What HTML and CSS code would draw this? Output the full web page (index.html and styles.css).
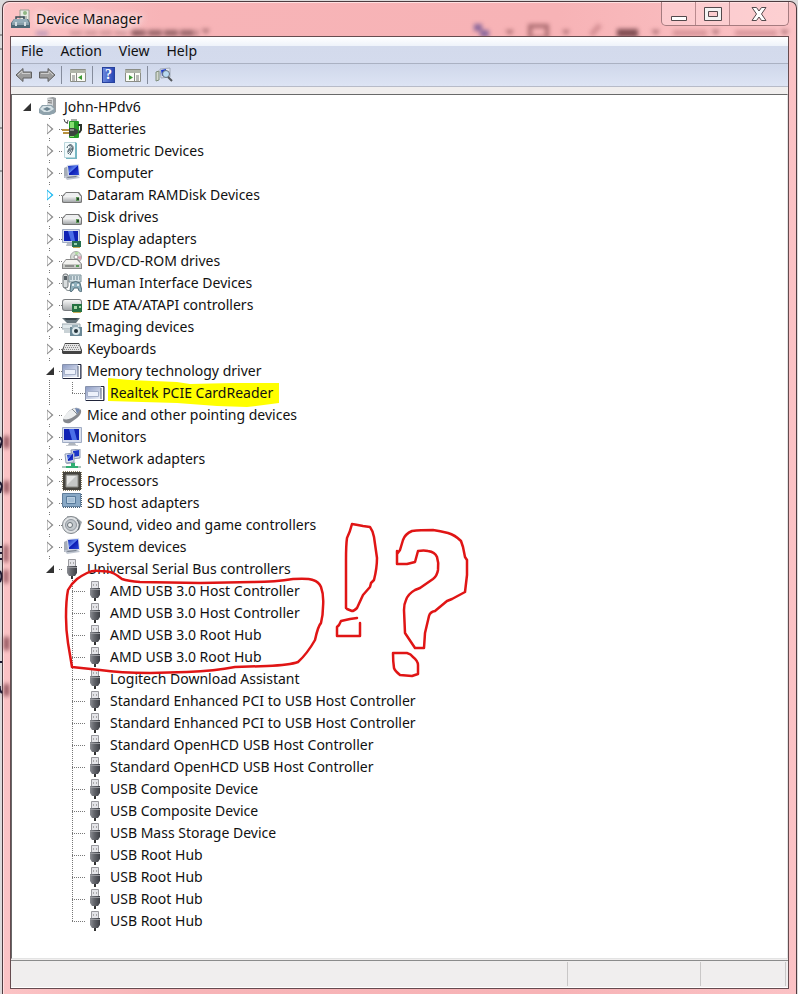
FILE: index.html
```html
<!DOCTYPE html>
<html lang="en">
<head>
    <meta charset="UTF-8">
    <meta name="viewport" content="width=device-width, initial-scale=1.0">
    <title>Device Manager</title>
    <link rel="stylesheet" href="styles.css">
</head>
<body>

    <!-- Icon set -->
    <svg class="sprites" aria-hidden="true">
        <defs>
            <linearGradient id="metal" x1="0" y1="0" x2="0" y2="1"><stop offset="0" stop-color="#f8f8f8"/><stop offset="1" stop-color="#a4a8aa"/></linearGradient>
            <linearGradient id="dark" x1="0" y1="0" x2="1" y2="0"><stop offset="0" stop-color="#8b8d93"/><stop offset=".4" stop-color="#65676d"/><stop offset="1" stop-color="#3d3f45"/></linearGradient>
            <linearGradient id="screen" x1="0" y1="0" x2="1" y2="1"><stop offset="0" stop-color="#0a1fae"/><stop offset=".45" stop-color="#5c80f0"/><stop offset=".5" stop-color="#0c1cb4"/><stop offset="1" stop-color="#2a48d8"/></linearGradient>
            <linearGradient id="card" x1="0" y1="0" x2="1" y2="1"><stop offset="0" stop-color="#8d9cc4"/><stop offset="1" stop-color="#f0f3fb"/></linearGradient>
        </defs>
        <symbol id="i-root" viewBox="0 0 20 20">
            <path d="M8 1l6-1 3 1v14l-3 2-6-2z" fill="#9a9ea1"/><path d="M8 1l6 1v15l-6-2z" fill="#d5d8da"/>
            <path d="M9 3.500l4 .5M9 5.500l4 .5" stroke="#777"/>
            <path d="M0 12l3-4h10l3 4v4l-5 2H4l-4-2z" fill="#8fa2ac"/><path d="M1 12l3-3h8l3 3-5 3H5z" fill="#d7e2e6"/>
            <path d="M4 12l4-2 4 2-4 2z" fill="#6d8592"/>
        </symbol>
        <symbol id="i-battery" viewBox="0 0 20 20">
            <path d="M9 0h6v3H9z" fill="#a6aaa6"/><rect x="7" y="2" width="10" height="17" rx="1" fill="#259a26"/>
            <path d="M8 3h4v15H8z" fill="#86df70"/><path d="M16 6h3v5l-2 3" fill="none" stroke="#2b332b" stroke-width="2"/>
            <path d="M7 9h5l4 2v3l-4 3H7z" fill="#3b443e"/><path d="M8 10h4v2H8z" fill="#828d84"/><path d="M0 11h7M1 14h6" stroke="#b8923f" stroke-width="2"/>
            <path d="M2 0l1 3 3 1M6 1L5 5" fill="none" stroke="#555"/>
        </symbol>
        <symbol id="i-finger" viewBox="0 0 20 20">
            <path d="M2.500 1.500h11v15h-11z" fill="#f2fbfc" stroke="#b9d5da"/><path d="M13 1l2 1v16H4v-1h9z" fill="#75b7c3"/>
            <path d="M5 7c1-5 7-4 6 1-.5 3-2 3-3 6M6 10c1-4 4-4 3-1s-2 2-3 4M7 5c2-1 4 1 3 4M5 11c2 0 2-1 3-3" fill="none" stroke="#40515d"/>
        </symbol>
        <symbol id="i-computer" viewBox="0 0 20 20">
            <path d="M2 5l4-2v11l-4 1z" fill="#a6adb7"/><path d="M5 2l12-1 1 12-12 1z" fill="#dbe1ed"/>
            <path d="M6 3l10-1 1 10H7z" fill="url(#screen)"/><path d="M2 13l13-1 3 3-13 2z" fill="#c0c6d1"/><path d="M4 14l10-1 1 1-9 1z" fill="#78808d"/>
        </symbol>
        <symbol id="i-disk" viewBox="0 0 20 20">
            <path d="M4 7h13l3 4v6q0 1-2 1H2q-2 0-2-1v-6z" fill="#777"/><path d="M4 8h12l3 4H1z" fill="#eeeff0"/>
            <rect x="1" y="11" width="18" height="6" rx="1" fill="url(#metal)"/><path d="M14 12h3v4h-3z" fill="#62985b"/><path d="M15 13h2v2h-2z" fill="#234d28"/>
        </symbol>
        <symbol id="i-monitor" viewBox="0 0 20 20">
            <path d="M.5.500h19v15H.500z" fill="#d8deec" stroke="#a1adc4"/><path d="M2 2h15v11H2z" fill="#1023b5"/><path d="M7 2h5l3 11h-5z" fill="#4b6ee8"/>
            <path d="M7 16h6l1 2H6z" fill="#aeb4bc"/><path d="M4 18h12v1H4z" fill="#c9cdd3"/>
        </symbol>
        <symbol id="i-display" viewBox="0 0 20 20">
            <path d="M.5.500h17v13H.500z" fill="#d8deec" stroke="#a1adc4"/><path d="M2 2h14v10H2z" fill="#1023b5"/><path d="M6 2h5l2 10H9z" fill="#4b6ee8"/>
            <path d="M5 14h6l1 3H4z" fill="#b8bdc5"/><path d="M10 12h9v6h-9z" fill="#27704f"/><path d="M12 14h3v2h-3z" fill="#9bd3b3"/><path d="M11 18.500h7" stroke="#c3a652"/>
        </symbol>
        <symbol id="i-dvd" viewBox="0 0 20 20">
            <circle cx="14" cy="6" r="5.500" fill="#d8dcd8" stroke="#a7aaa7"/><path d="M14 6l-1-5h4z" fill="#b2dca3"/><path d="M14 6l5-1v4z" fill="#dfa1b6"/><circle cx="14" cy="6" r="2" fill="#fff" stroke="#999"/>
            <path d="M4 8h12l4 5v5H0v-5z" fill="#888"/><path d="M4 9h11l4 4H1z" fill="#f4f4f1"/><path d="M1 13h18v4H1z" fill="#c7c9c5"/><path d="M3 15h9" stroke="#555"/><path d="M14 14h3v2h-3z" fill="#5a9a58"/>
        </symbol>
        <symbol id="i-hid" viewBox="0 0 20 20">
            <path d="M7 2h12v7H7z" fill="#d9e4e8" stroke="#799098"/><path d="M8 4h10M8 6h10" stroke="#657d88" stroke-dasharray="2 1"/>
            <rect x="1" y="1" width="5" height="14" rx="2" fill="#d8dcdd" stroke="#6f7578"/><path d="M2 3h3v4H2z" fill="#555f65"/><path d="M3 14c0 4 5 4 6 3" fill="none" stroke="#687276"/>
            <path d="M9 10q5-3 9 0l2 8q-3 2-4-3h-4q-2 5-4 3z" fill="#8fb0bc" stroke="#526d79"/><circle cx="11" cy="12" r="1" fill="#fff"/><circle cx="16" cy="12" r="1" fill="#fff"/>
        </symbol>
        <symbol id="i-ide" viewBox="0 0 20 20">
            <rect x="0" y="4" width="20" height="12" rx="3" fill="#7a7d80"/><rect x="1" y="5" width="18" height="10" rx="2" fill="url(#metal)"/>
            <path d="M10 9h10v8H10z" fill="#257142"/><path d="M12 11h3v3h-3zM17 11h2v2h-2z" fill="#a6d7a7"/><path d="M11 17.500h8" stroke="#c8ad5b"/>
        </symbol>
        <symbol id="i-imaging" viewBox="0 0 20 20">
            <path d="M0 1h18l-4 5H5z" fill="#66747b"/><path d="M2 1h14l-2 2H4z" fill="#3f4b50"/><path d="M0 7h18v5H0z" fill="#dfe7ea" stroke="#9da9af"/>
            <path d="M2 12h8v4H2z" fill="#c9d2d6"/><path d="M8 10h12v9H8z" fill="#6b8896"/><path d="M10 8h6v3h-6z" fill="#9bb0b9"/><circle cx="14" cy="14" r="4" fill="#dce8ec"/><circle cx="14" cy="14" r="2" fill="#26343c"/>
        </symbol>
        <symbol id="i-keyboard" viewBox="0 0 20 20">
            <path d="M3 4h14l3 7v3l-1 1H1l-1-1v-3z" fill="#444"/><path d="M3 5h14l2 7H1z" fill="#e4e4e4"/>
            <path d="M4 6.500h13M2 10.500h16" stroke="#888" stroke-dasharray="1 1"/><path d="M3 8.500h14" stroke="#888" stroke-dasharray="1 1"/>
        </symbol>
        <symbol id="i-card" viewBox="0 0 20 20">
            <path d="M.5 3.500h18v14H.500z" fill="#fff" stroke="#8792ac"/><path d="M1 4h15v12H1z" fill="url(#card)"/><path d="M2.500 8.500h11v5h-11z" fill="#edf1fb" stroke="#a5b0c9"/>
            <path d="M16 3.500h3v14H1" fill="none" stroke="#20243a"/><path d="M16 5v11" stroke="#56627d"/>
        </symbol>
        <symbol id="i-mouse" viewBox="0 0 20 20">
            <path d="M7 6q8-6 12-1 1 4-4 8l-7 5q-6 1-7-3 0-2 6-9z" fill="#85888e"/><path d="M7 6q6-5 11-2l-3 5q-7 7-14 5 1-3 6-8z" fill="#eceeef"/>
            <path d="M13 3q4 0 5 2l-3 4z" fill="#7085ac"/><path d="M10 4l5 5" stroke="#80878e"/>
        </symbol>
        <symbol id="i-network" viewBox="0 0 20 20">
            <path d="M9 1l9-1v9l-8 1z" fill="#d8dfea" stroke="#8d9bb4"/><path d="M11 2l6-1v6l-6 1z" fill="#1b37ca"/>
            <path d="M3 5l9-1v9l-8 1z" fill="#e1e6ef" stroke="#8d9bb4"/><path d="M5 6l6-1v6l-5 1z" fill="url(#screen)"/>
            <path d="M4 14l8-1 2 1-9 1z" fill="#9aa4b6"/><path d="M9 14h4v3h6v2H1v-2h8z" fill="#31ae73"/><path d="M0 17h4v2H0zM16 17h3v2h-3z" fill="#abc6be"/>
        </symbol>
        <symbol id="i-cpu" viewBox="0 0 20 20">
            <path d="M1 1h18v18H1z" fill="#46443e"/><path d="M.5 1v18M19.500 1v18M1 .5h18M1 19.500h18" stroke="#8c8369" stroke-dasharray="1 1"/>
            <path d="M4 4h12v12H4z" fill="#c5c7c6" stroke="#8b8b86"/><path d="M5 5h9l-9 9z" fill="#e5e6e5"/>
        </symbol>
        <symbol id="i-sd" viewBox="0 0 20 20">
            <path d="M.5.500h18v13H.500z" fill="#89a9c6" stroke="#617f9c"/><path d="M4.500 3.500h9v7h-9z" fill="#b9cfe1" stroke="#577a9b"/>
            <path d="M19.500 1v13M1 14.500h17" stroke="#465f76" stroke-dasharray="1 1"/><path d="M6 5h6v4H6z" fill="#a5bfd6"/>
        </symbol>
        <symbol id="i-sound" viewBox="0 0 20 20">
            <path d="M5 1l9 1 6 5-3 8-8 4z" fill="#9fa5aa"/><circle cx="9" cy="10" r="8.500" fill="#dfe2e4" stroke="#81878c"/><circle cx="9" cy="10" r="5.500" fill="#c1c7cb" stroke="#9298a0"/>
            <circle cx="8" cy="10" r="2.500" fill="#eff1f1" stroke="#6a7278"/><path d="M15 5q4 4 1 10" stroke="#5d666c" fill="none"/>
        </symbol>
        <symbol id="i-usb" viewBox="0 0 20 20">
            <path d="M6.500.500h7v7h-7z" fill="#e4e4e8" stroke="#9a9a9f"/><path d="M8 3h1v2H8zM11 3h1v2h-1z" fill="#aaa"/>
            <path d="M5 7h10v7l-2 3H7l-2-3z" fill="url(#dark)"/><path d="M5 8.500h10" stroke="#97989d"/><path d="M9 17h2v3H9z" fill="#333"/>
        </symbol>
        <symbol id="i-back" viewBox="0 0 18 16">
            <path d="M1 8l7-6.500v3.500h8.500v6H8v3.500z" fill="#9c9c9c" stroke="#616161" stroke-linejoin="round"/><path d="M3 8l4-4v2.500h8" fill="none" stroke="#cdcdcd"/>
        </symbol>
    </svg>

    <div class="window">
        <!-- Dark bits of the page behind the left frame -->
        <svg class="edge" viewBox="0 0 10 700" aria-hidden="true">
            <path d="M0 35h2M0 49h2M0 128h2M0 171h2" stroke="#555"/>
            <path d="M0 437l2 4-2 7M0 482l2 4-2 7M0 547h2M0 553h2M0 559h2M0 571q3 5 0 11M0 662h2M0 686q-1 4 2 7" fill="none" stroke="#15152e" stroke-width="2"/>
            <g class="smudge" fill="#8a4c55">
                <path d="M4 436h5v12H4zM4 481h5v12H4zM4 545h4v17H4zM4 570h4v13H4zM4 637h5v13H4zM4 684h5v12H4z"/>
            </g>
        </svg>

        <header class="titlebar">
            <!-- Blurred shapes seen through the glass -->
            <svg class="glass" aria-hidden="true">
                <path d="M60 31h70" stroke="#8f5f64" stroke-width="4" stroke-dasharray="12 3" opacity=".4"/>
                <path d="M122 31h66" stroke="#5c3338" stroke-width="6" stroke-dasharray="14 2" opacity=".6"/>
                <path d="M191 27h9l-4 5z" fill="#6b3c40" opacity=".6"/>
                <path d="M26 29h12v6H26z" fill="#8c7ab0" opacity=".5"/>
            </svg>
            <svg class="glass glass-right" viewBox="470 0 328 36" aria-hidden="true">
                <path d="M474 22h8v6h7v7h-9v-6h-6z" fill="#5c4790" opacity=".7"/>
                <path d="M530 24h17v12h-17z" fill="none" stroke="#7b3f45" stroke-width="4" opacity=".6"/>
                <path d="M505 28h9l-4 5zM562 28h8l-4 5zM651 28h9l-4 5zM711 28h9l-4 5zM780 28h9l-4 5z" fill="#72373d" opacity=".6"/>
                <path d="M617 31h21" stroke="#4f2228" stroke-width="8" opacity=".7"/>
                <path d="M591 33l9-10M673 31h34M735 31h42" stroke="#a85e65" stroke-width="5" opacity=".45"/>
            </svg>
            <svg class="app-icon" viewBox="0 0 20 20" aria-hidden="true">
                <path d="M9 1h9v13H9z" fill="#e8ece5" stroke="#9a9c92"/><circle cx="14" cy="4" r="2" fill="#8fb784"/><path d="M12 7h4v7h-4z" fill="#b6bcb5"/>
                <path d="M5 11V8h8v3" fill="none" stroke="#394c57" stroke-width="1.500"/><path d="M3 10h14l2 4v5H0v-5z" fill="#4d6876"/>
                <path d="M3 10h13l2 4H1z" fill="#93acb8"/><path d="M1 15h17" stroke="#c1d4dc"/><path d="M4 13h2v4H4zM13 13h2v4h-2z" fill="#d4dde1"/>
            </svg>
            <h1>Device Manager</h1>
            <div class="controls">
                <button class="minimize" aria-label="Minimize"><svg viewBox="0 0 20 16"><path d="M2.500 10.500h15v4h-15z" fill="#fff" stroke="#53494c"/></svg></button>
                <button class="maximize" aria-label="Maximize"><svg viewBox="0 0 20 16"><path d="M1.500 1.500h17v13h-17zM5.500 5.500v5h9v-5z" fill="#f4f4f4" fill-rule="evenodd" stroke="#53494c"/></svg></button>
                <button class="close" aria-label="Close"><svg viewBox="0 0 20 16"><path d="M3 1.500h4.500L10 5l2.500-3.500H17L12.500 8l4.500 6.500h-4.500L10 11l-2.500 3.500H3L7.500 8z" fill="#fff" stroke="#53494c" stroke-linejoin="round"/></svg></button>
            </div>
        </header>

        <div class="client">
            <nav class="menubar">
                <button>File</button>
                <button>Action</button>
                <button>View</button>
                <button>Help</button>
            </nav>

            <div class="toolbar">
                <button aria-label="Back"><svg viewBox="0 0 18 16"><use href="#i-back"/></svg></button>
                <button aria-label="Forward"><svg class="flip" viewBox="0 0 18 16"><use href="#i-back"/></svg></button>
                <i class="sep"></i>
                <button aria-label="Show console tree"><svg viewBox="0 0 18 16"><path d="M1.500 2.500h15v12h-15z" fill="#fbfcf6" stroke="#8b8d85"/><path d="M1 3h16v3H1z" fill="#b0b5a9"/><path d="M3 9h3M3 11h3M3 13h3" stroke="#777"/><path d="M7.500 6v8" stroke="#888"/><path d="M13 8v5l-4-2.500z" fill="#3b9a34"/></svg></button>
                <i class="sep"></i>
                <button class="help" aria-label="Help">?</button>
                <button aria-label="Show action pane"><svg viewBox="0 0 18 16"><path d="M1.500 2.500h15v12h-15z" fill="#fbfcf6" stroke="#8b8d85"/><path d="M1 3h16v3H1z" fill="#b0b5a9"/><path d="M12 9h3M12 11h3M12 13h3" stroke="#777"/><path d="M10.500 6v8" stroke="#888"/><path d="M5 8v5l4-2.500z" fill="#3b9a34"/></svg></button>
                <i class="sep"></i>
                <button aria-label="Scan for hardware changes"><svg viewBox="0 0 18 16"><path d="M1 5l3-1v9l-3 1z" fill="#d4d9d0" stroke="#7f8e7b"/><path d="M5 2l10-1v9l-9 1z" fill="#e2e6ef" stroke="#a1a9b8"/><path d="M6 3l5-1v6l-4 1z" fill="#1e3bca"/><circle cx="11" cy="7" r="3.500" fill="#b9d9f1" stroke="#66737e"/><path d="M13 10l4 4" stroke="#55585c" stroke-width="2"/></svg></button>
            </div>

            <main class="pane">
                <!-- Yellow marker under the card reader -->
                <svg class="marker" viewBox="12 95 476 600" aria-hidden="true">
                    <path d="M108 378l22 2 47 2 13 2 43-1 46 0v20l-32 4-30-1-40-3-69-2z" fill="#ffff00"/>
                </svg>

                <ul class="tree root">
                    <li>
                        <div class="row"><button class="toggle open" aria-label="Collapse"></button><svg class="icon"><use href="#i-root"/></svg><span>John-HPdv6</span></div>
                        <ul class="tree">
                            <li><div class="row"><button class="toggle" aria-label="Expand"></button><svg class="icon"><use href="#i-battery"/></svg><span>Batteries</span></div></li>
                            <li><div class="row"><button class="toggle" aria-label="Expand"></button><svg class="icon"><use href="#i-finger"/></svg><span>Biometric Devices</span></div></li>
                            <li><div class="row"><button class="toggle" aria-label="Expand"></button><svg class="icon"><use href="#i-computer"/></svg><span>Computer</span></div></li>
                            <li><div class="row"><button class="toggle hot" aria-label="Expand"></button><svg class="icon"><use href="#i-disk"/></svg><span>Dataram RAMDisk Devices</span></div></li>
                            <li><div class="row"><button class="toggle" aria-label="Expand"></button><svg class="icon"><use href="#i-disk"/></svg><span>Disk drives</span></div></li>
                            <li><div class="row"><button class="toggle" aria-label="Expand"></button><svg class="icon"><use href="#i-display"/></svg><span>Display adapters</span></div></li>
                            <li><div class="row"><button class="toggle" aria-label="Expand"></button><svg class="icon"><use href="#i-dvd"/></svg><span>DVD/CD-ROM drives</span></div></li>
                            <li><div class="row"><button class="toggle" aria-label="Expand"></button><svg class="icon"><use href="#i-hid"/></svg><span>Human Interface Devices</span></div></li>
                            <li><div class="row"><button class="toggle" aria-label="Expand"></button><svg class="icon"><use href="#i-ide"/></svg><span>IDE ATA/ATAPI controllers</span></div></li>
                            <li><div class="row"><button class="toggle" aria-label="Expand"></button><svg class="icon"><use href="#i-imaging"/></svg><span>Imaging devices</span></div></li>
                            <li><div class="row"><button class="toggle" aria-label="Expand"></button><svg class="icon"><use href="#i-keyboard"/></svg><span>Keyboards</span></div></li>
                            <li>
                                <div class="row"><button class="toggle open" aria-label="Collapse"></button><svg class="icon"><use href="#i-card"/></svg><span>Memory technology driver</span></div>
                                <ul class="tree">
                                    <li><div class="row leaf"><svg class="icon"><use href="#i-card"/></svg><span>Realtek PCIE CardReader</span></div></li>
                                </ul>
                            </li>
                            <li><div class="row"><button class="toggle" aria-label="Expand"></button><svg class="icon"><use href="#i-mouse"/></svg><span>Mice and other pointing devices</span></div></li>
                            <li><div class="row"><button class="toggle" aria-label="Expand"></button><svg class="icon"><use href="#i-monitor"/></svg><span>Monitors</span></div></li>
                            <li><div class="row"><button class="toggle" aria-label="Expand"></button><svg class="icon"><use href="#i-network"/></svg><span>Network adapters</span></div></li>
                            <li><div class="row"><button class="toggle" aria-label="Expand"></button><svg class="icon"><use href="#i-cpu"/></svg><span>Processors</span></div></li>
                            <li><div class="row"><button class="toggle" aria-label="Expand"></button><svg class="icon"><use href="#i-sd"/></svg><span>SD host adapters</span></div></li>
                            <li><div class="row"><button class="toggle" aria-label="Expand"></button><svg class="icon"><use href="#i-sound"/></svg><span>Sound, video and game controllers</span></div></li>
                            <li><div class="row"><button class="toggle" aria-label="Expand"></button><svg class="icon"><use href="#i-computer"/></svg><span>System devices</span></div></li>
                            <li>
                                <div class="row"><button class="toggle open" aria-label="Collapse"></button><svg class="icon"><use href="#i-usb"/></svg><span>Universal Serial Bus controllers</span></div>
                                <ul class="tree">
                                    <li><div class="row leaf"><svg class="icon"><use href="#i-usb"/></svg><span>AMD USB 3.0 Host Controller</span></div></li>
                                    <li><div class="row leaf"><svg class="icon"><use href="#i-usb"/></svg><span>AMD USB 3.0 Host Controller</span></div></li>
                                    <li><div class="row leaf"><svg class="icon"><use href="#i-usb"/></svg><span>AMD USB 3.0 Root Hub</span></div></li>
                                    <li><div class="row leaf"><svg class="icon"><use href="#i-usb"/></svg><span>AMD USB 3.0 Root Hub</span></div></li>
                                    <li><div class="row leaf"><svg class="icon"><use href="#i-usb"/></svg><span>Logitech Download Assistant</span></div></li>
                                    <li><div class="row leaf"><svg class="icon"><use href="#i-usb"/></svg><span>Standard Enhanced PCI to USB Host Controller</span></div></li>
                                    <li><div class="row leaf"><svg class="icon"><use href="#i-usb"/></svg><span>Standard Enhanced PCI to USB Host Controller</span></div></li>
                                    <li><div class="row leaf"><svg class="icon"><use href="#i-usb"/></svg><span>Standard OpenHCD USB Host Controller</span></div></li>
                                    <li><div class="row leaf"><svg class="icon"><use href="#i-usb"/></svg><span>Standard OpenHCD USB Host Controller</span></div></li>
                                    <li><div class="row leaf"><svg class="icon"><use href="#i-usb"/></svg><span>USB Composite Device</span></div></li>
                                    <li><div class="row leaf"><svg class="icon"><use href="#i-usb"/></svg><span>USB Composite Device</span></div></li>
                                    <li><div class="row leaf"><svg class="icon"><use href="#i-usb"/></svg><span>USB Mass Storage Device</span></div></li>
                                    <li><div class="row leaf"><svg class="icon"><use href="#i-usb"/></svg><span>USB Root Hub</span></div></li>
                                    <li><div class="row leaf"><svg class="icon"><use href="#i-usb"/></svg><span>USB Root Hub</span></div></li>
                                    <li><div class="row leaf"><svg class="icon"><use href="#i-usb"/></svg><span>USB Root Hub</span></div></li>
                                    <li><div class="row leaf"><svg class="icon"><use href="#i-usb"/></svg><span>USB Root Hub</span></div></li>
                                </ul>
                            </li>
                        </ul>
                    </li>
                </ul>

                <!-- Red pen marks -->
                <svg class="pen" viewBox="12 95 476 600" aria-hidden="true">
                    <path d="M87 573Q93 570 100 571Q108 571 113 573Q117 575 122 579Q128 581 140 582L200 583L253 582Q275 582 293 579Q308 578 313 580Q319 582 321 587Q324 595 323 607Q323 615 321 623Q318 626 315 640Q307 654 298 662Q290 665 267 666L235 667Q215 671 187 672L150 673Q120 673 100 670L72 667Q70 655 68 643Q66 630 66 617Q66 600 68 590Q72 583 77 579Q81 576 87 573"/>
                    <path d="M346 608V560Q346 545 347 538Q350 532 352 524Q358 525 363 526L370 527Q373 531 374 537L377 558Q377 568 374 580L371 583L370 587L363 595L357 608Q354 611 352 611L347 609"/>
                    <path d="M357 618L350 619L341 621L339 625L337 627V636H360V623"/>
                    <path d="M397 551V564H407L415 562L418 551Q424 550 428 551Q435 552 437 557Q439 563 438 570Q437 576 433 579L420 588L415 590Q408 594 406 600Q404 604 404 610L405 633L415 648H424L425 633L429 616Q430 612 435 611L447 601L452 599L465 592L467 575V560L465 557L463 547L461 541Q455 535 448 533Q440 531 433 530Q420 530 412 531Q405 534 403 540L400 550L397 554"/>
                    <path d="M393 653H407Q411 654 413 657Q418 661 418 665V674L412 676L400 675Q395 671 394 668Q393 662 393 653"/>
                </svg>
            </main>

            <footer class="statusbar">
                <div></div>
                <div></div>
                <div></div>
            </footer>
        </div>
    </div>

</body>
</html>
```
FILE: styles.css
```css
* {
    box-sizing: border-box;
}

body {
    margin: 0;
    padding: 1px 1px 0 2px;
    min-height: 100vh;
    display: flex;
    background: #dcdadb;
    color: #111;
    font: 14px/22px "Noto Sans", "Open Sans", sans-serif;
}

button {
    margin: 0;
    padding: 0;
    border: 0;
    background: none;
    color: inherit;
    font: inherit;
}

ul {
    margin: 0;
    padding: 0;
    list-style: none;
}

.sprites {
    position: absolute;
    width: 0;
    height: 0;
}

/* Window frame */
.window {
    flex: 1;
    display: flex;
    flex-direction: column;
    padding: 0 7px 5px;
    border: 1px solid #4d3c40;
    border-bottom: 0;
    border-radius: 7px 7px 0 0;
    background: linear-gradient(90deg, #fbc3c5, #f7b4b7 20%, #f7b3b6 70%, #fbc2c5);
    box-shadow: inset 1px 1px 0 #ffe0e1;
}

.edge {
    position: absolute;
    left: 0;
    top: 0;
    width: 10px;
    height: 700px;
}

.smudge {
    filter: blur(2px);
}

.titlebar {
    position: relative;
    display: flex;
    align-items: center;
    height: 34px;
}

.glass {
    position: absolute;
    left: 0;
    top: 0;
    width: 220px;
    height: 34px;
    filter: blur(2px);
}

.glass-right {
    left: auto;
    right: -9px;
    width: 328px;
    height: 36px;
}

.app-icon {
    width: 20px;
    height: 20px;
    margin-left: 1px;
    position: relative;
}

h1 {
    position: relative;
    margin: 0 0 0 5px;
    font-size: 14px;
    font-weight: 400;
    line-height: 20px;
    text-shadow: 0 0 8px #fff, 0 0 8px #fff;
}

.controls {
    position: relative;
    display: flex;
    align-self: flex-start;
    height: 24px;
    margin-left: auto;
    border: 1px solid #a57b7f;
    border-top: 0;
    border-radius: 0 0 5px 5px;
    background: rgba(255, 225, 226, 0.45);
}

.controls button {
    display: flex;
    align-items: center;
    justify-content: center;
    width: 34px;
    border-right: 1px solid #b98a8e;
}

.controls svg {
    width: 20px;
    height: 16px;
}

.controls .close {
    width: 58px;
    border-right: 0;
}

/* Client area */
.client {
    position: relative;
    flex: 1;
    display: flex;
    flex-direction: column;
    border: 1px solid #664b4f;
    background: #f0eeee;
}

.menubar {
    display: flex;
    gap: 17px;
    height: 27px;
    padding: 2px 0 0 10px;
    border-bottom: 1px solid #aab1c2;
    background: linear-gradient(#fff, #eef2fa 35%, #d3daec 36%, #d4dbed);
}

.menubar button {
    line-height: 22px;
}

.toolbar {
    display: flex;
    align-items: center;
    height: 23px;
    padding-left: 4px;
    border-bottom: 1px solid #b7bbc8;
    background: linear-gradient(#cfd7ea, #dde4f4);
}

.toolbar button {
    height: 16px;
    margin-right: 5px;
}

.toolbar svg {
    display: block;
    width: 18px;
    height: 16px;
}

.flip {
    transform: scaleX(-1);
}

.sep {
    width: 1px;
    height: 18px;
    margin-right: 7px;
    background: #858c9c;
}

.toolbar .help {
    width: 13px;
    margin: 0 9px 0 2px;
    border: 1px solid #27419d;
    background: linear-gradient(90deg, #6b87dc, #2947b5);
    color: #fff;
    font: 700 14px/14px "Liberation Serif", serif;
}

/* Device tree */
.pane {
    position: relative;
    flex: 1;
    margin-top: 7px;
    padding: 1px 0 0 7px;
    border: 1px solid #696969;
    border-right-color: #e3e3e3;
    border-bottom-color: #e3e3e3;
    background: #fff;
}

.marker,
.pen {
    position: absolute;
    left: 0;
    top: 0;
    width: 476px;
    height: 600px;
}

.pen {
    z-index: 2;
    fill: none;
    stroke: #e01515;
    stroke-width: 2.5;
    stroke-linecap: round;
    stroke-linejoin: round;
    pointer-events: none;
}

.root {
    position: relative;
    z-index: 1;
}

/* dotted connector lines, one vertical and one horizontal per item */
.tree .tree {
    padding-left: 23px;
}

.tree .tree > li {
    background:
        repeating-linear-gradient(#777 0 1px, transparent 1px 2px) 7px 0 / 1px 100% no-repeat,
        repeating-linear-gradient(90deg, #777 0 1px, transparent 1px 2px) 7px 11px / 13px 1px no-repeat;
}

.tree .tree > li:last-child {
    background-size: 1px 12px, 13px 1px;
}

.row {
    display: flex;
    align-items: center;
    height: 22px;
    white-space: nowrap;
}

.leaf {
    padding-left: 20px;
}

.icon {
    width: 20px;
    height: 20px;
    margin-right: 5px;
}

.toggle {
    display: flex;
    align-items: center;
    justify-content: center;
    width: 16px;
    height: 18px;
    margin-right: 4px;
    background: #fff;
}

.toggle::before {
    content: "";
    width: 7px;
    height: 12px;
    background: #8c8c8c;
    clip-path: polygon(0 0, 100% 50%, 0 100%, 0 0, 1px 2px, 1px 10px, 5px 50%, 1px 2px);
}

.toggle.hot::before {
    background: #1bb8f0;
}

.toggle.open::before {
    width: 8px;
    height: 8px;
    background: #333;
    clip-path: polygon(100% 0, 100% 100%, 0 100%);
}

/* Status bar */
.statusbar {
    display: flex;
    height: 28px;
    margin-top: 1px;
    padding: 1px 2px;
    border-top: 1px solid #8b8b8b;
    border-bottom: 1px solid #fff;
}

.statusbar div {
    width: 85px;
    border-right: 1px solid #c9c7c7;
}

.statusbar div:first-child {
    flex: 1;
}

.statusbar div:nth-child(2) {
    width: 133px;
}
```
